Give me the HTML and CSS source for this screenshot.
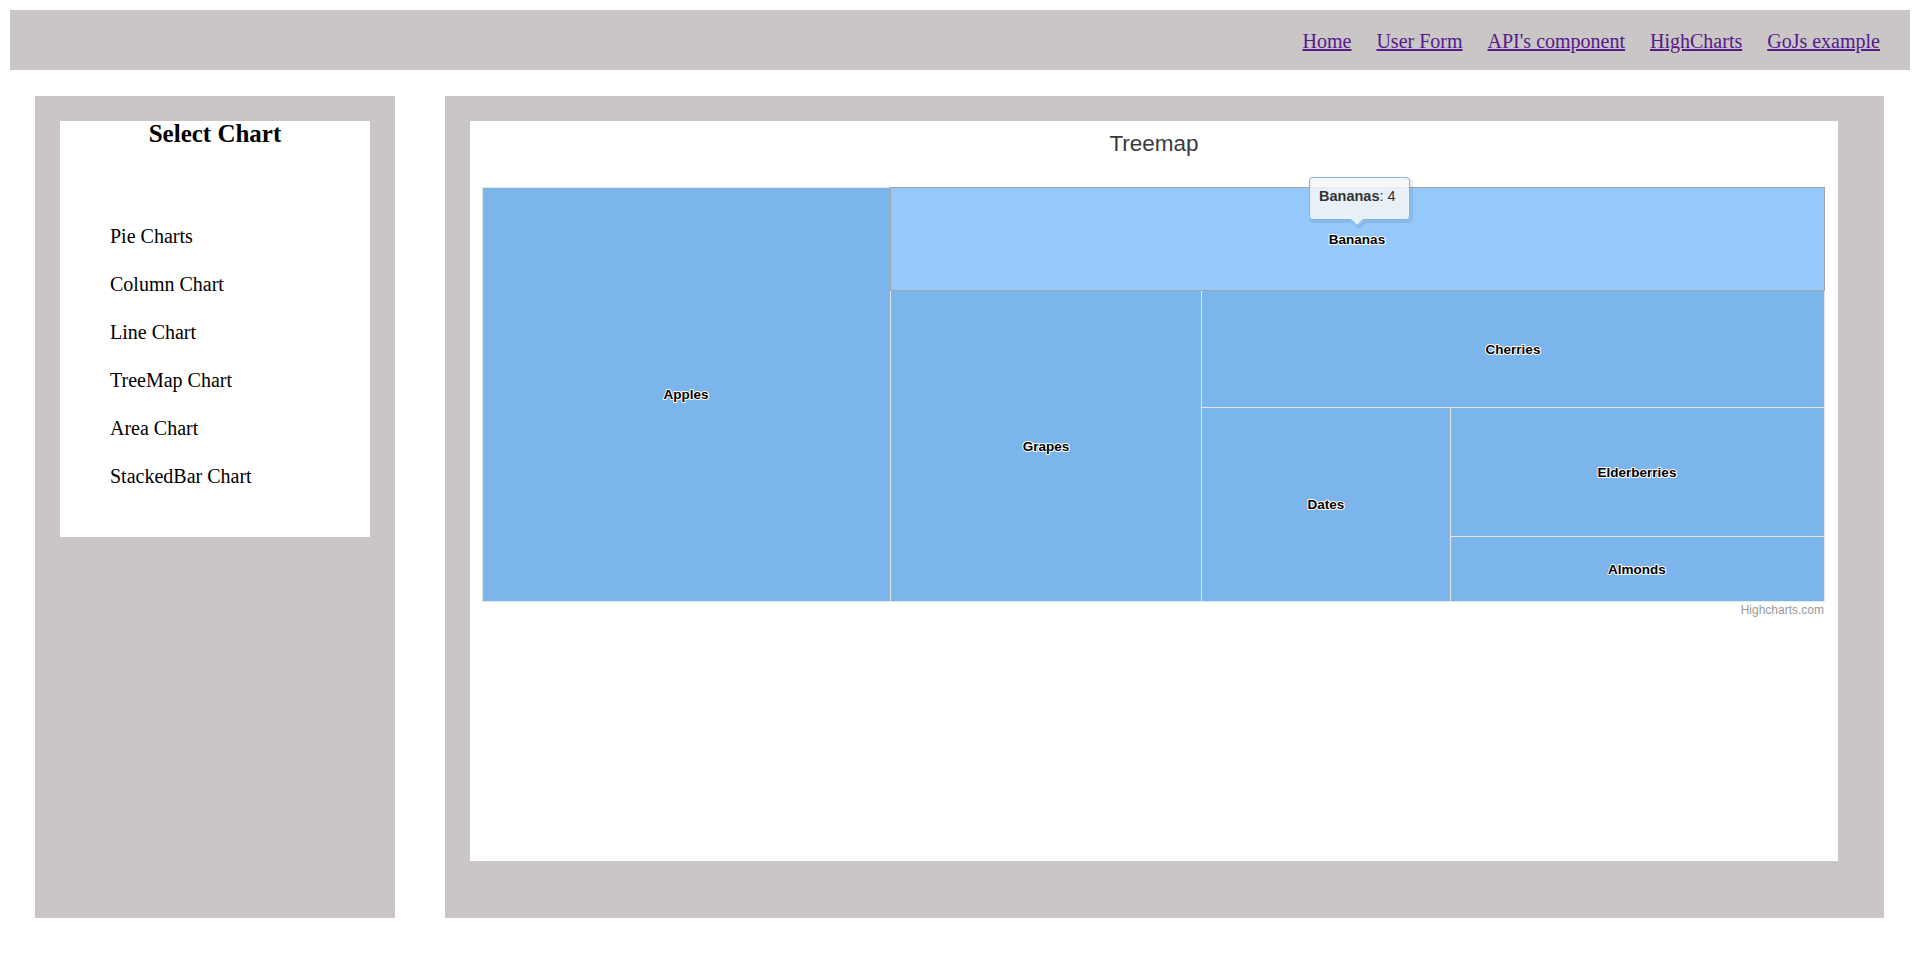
FILE: index.html
```html
<!DOCTYPE html>
<html lang="en">
<head>
<meta charset="utf-8">
<title>HighCharts</title>
<link rel="stylesheet" href="styles.css">
</head>
<body>
<header class="topbar">
  <nav class="nav">
    <a href="#" class="nav-link">Home</a>
    <a href="#" class="nav-link">User Form</a>
    <a href="#" class="nav-link">API's component</a>
    <a href="#" class="nav-link">HighCharts</a>
    <a href="#" class="nav-link">GoJs example</a>
  </nav>
</header>
<main class="layout">
  <aside class="side-panel">
    <div class="side-card">
      <h2 class="side-title">Select Chart</h2>
      <ul class="chart-list">
        <li class="chart-item">Pie Charts</li>
        <li class="chart-item">Column Chart</li>
        <li class="chart-item">Line Chart</li>
        <li class="chart-item">TreeMap Chart</li>
        <li class="chart-item">Area Chart</li>
        <li class="chart-item">StackedBar Chart</li>
      </ul>
    </div>
  </aside>
  <section class="chart-panel">
    <div class="chart-card">
      <svg class="chart-svg" width="1368" height="500" viewBox="0 0 1368 500" xmlns="http://www.w3.org/2000/svg">
        <text class="chart-title" x="684" y="30" text-anchor="middle">Treemap</text>
        <g class="cells">
          <rect x="12.5" y="66.5" width="408" height="414" fill="#7cb5ec" stroke="#e6e6e6"/>
          <rect x="420.5" y="169.5" width="311" height="311" fill="#7cb5ec" stroke="#e6e6e6"/>
          <rect x="731.5" y="169.5" width="623" height="117" fill="#7cb5ec" stroke="#e6e6e6"/>
          <rect x="731.5" y="286.5" width="249" height="194" fill="#7cb5ec" stroke="#e6e6e6"/>
          <rect x="980.5" y="286.5" width="374" height="129" fill="#7cb5ec" stroke="#e6e6e6"/>
          <rect x="980.5" y="415.5" width="374" height="65" fill="#7cb5ec" stroke="#e6e6e6"/>
          <rect x="420.5" y="66.5" width="934" height="103" fill="#95c9fb" stroke="#a3a3a3"/>
        </g>
        <g class="cell-labels" text-anchor="middle">
          <text x="216" y="278">Apples</text>
          <text x="887" y="122.5">Bananas</text>
          <text x="576" y="329.5">Grapes</text>
          <text x="1043" y="232.5">Cherries</text>
          <text x="856" y="388">Dates</text>
          <text x="1167" y="356">Elderberries</text>
          <text x="1167" y="453">Almonds</text>
        </g>
        <text class="credits" x="1354" y="493" text-anchor="end">Highcharts.com</text>
        <g class="tooltip">
          <path d="M 843 58.5 L 937 58.5 Q 941.5 58.5 941.5 62 L 941.5 97 Q 941.5 100.5 938 100.5 L 895 100.5 L 889 106.5 L 883 100.5 L 844 100.5 Q 840.5 100.5 840.5 97 L 840.5 62 Q 840.5 58.5 843 58.5 Z" fill="none" stroke="rgba(0,0,0,0.08)" stroke-width="3"/>
          <path d="M 842 56.5 L 936 56.5 Q 939.5 56.5 939.5 60 L 939.5 95 Q 939.5 98.5 936 98.5 L 893 98.5 L 887 104.5 L 881 98.5 L 842 98.5 Q 839.5 98.5 839.5 95 L 839.5 60 Q 839.5 56.5 842 56.5 Z" fill="rgba(247,247,247,0.85)" stroke="#7cb5ec"/>
          <text class="tooltip-text" x="849" y="80"><tspan class="tooltip-name">Bananas</tspan>: 4</text>
        </g>
      </svg>
    </div>
  </section>
</main>
</body>
</html>
```
FILE: styles.css
```css
html, body {
  margin: 0;
  padding: 0;
  background: #ffffff;
}

body {
  padding: 10px 10px 0 10px;
  font-family: "Liberation Serif", "Times New Roman", serif;
  color: #000;
}

.topbar {
  height: 60px;
  background: #c9c6c5;
  display: flex;
  align-items: center;
  justify-content: flex-end;
  padding-right: 30px;
}

.nav {
  display: flex;
  gap: 25px;
  padding-top: 3px;
}

.nav-link {
  font-family: "Liberation Serif", "Times New Roman", serif;
  font-size: 20px;
  line-height: 23px;
  color: #551a8b;
  text-decoration: underline;
}

.layout {
  display: flex;
  align-items: stretch;
  gap: 50px;
  margin-top: 26px;
  padding: 0 26px 0 25px;
}

.side-panel {
  width: 360px;
  flex: 0 0 360px;
  box-sizing: border-box;
  background: #c9c6c5;
  padding: 25px;
}

.side-card {
  background: #ffffff;
  padding-bottom: 37px;
}

.side-title {
  margin: 0;
  font-size: 25px;
  line-height: 26px;
  font-weight: bold;
  text-align: center;
}

.chart-list {
  list-style: none;
  margin: 65px 0 0 0;
  padding: 0 0 0 50px;
}

.chart-item {
  font-size: 20px;
  line-height: 48px;
  height: 48px;
}

.chart-panel {
  flex: 1 1 auto;
  background: #c9c6c5;
  padding: 25px 46px 57px 25px;
}

.chart-card {
  background: #ffffff;
  height: 740px;
}

.chart-svg {
  display: block;
  font-family: "Liberation Sans", Arial, sans-serif;
}

.chart-title {
  font-size: 22.5px;
  fill: #3a3a3a;
}

.cell-labels text {
  font-size: 13.5px;
  font-weight: bold;
  fill: #000000;
  stroke: #ffffff;
  stroke-width: 2px;
  stroke-linejoin: round;
  paint-order: stroke;
}

.credits {
  font-size: 12px;
  fill: #999999;
}

.tooltip-text {
  font-size: 14.5px;
  fill: #333333;
}

.tooltip-name {
  font-weight: bold;
}
```
